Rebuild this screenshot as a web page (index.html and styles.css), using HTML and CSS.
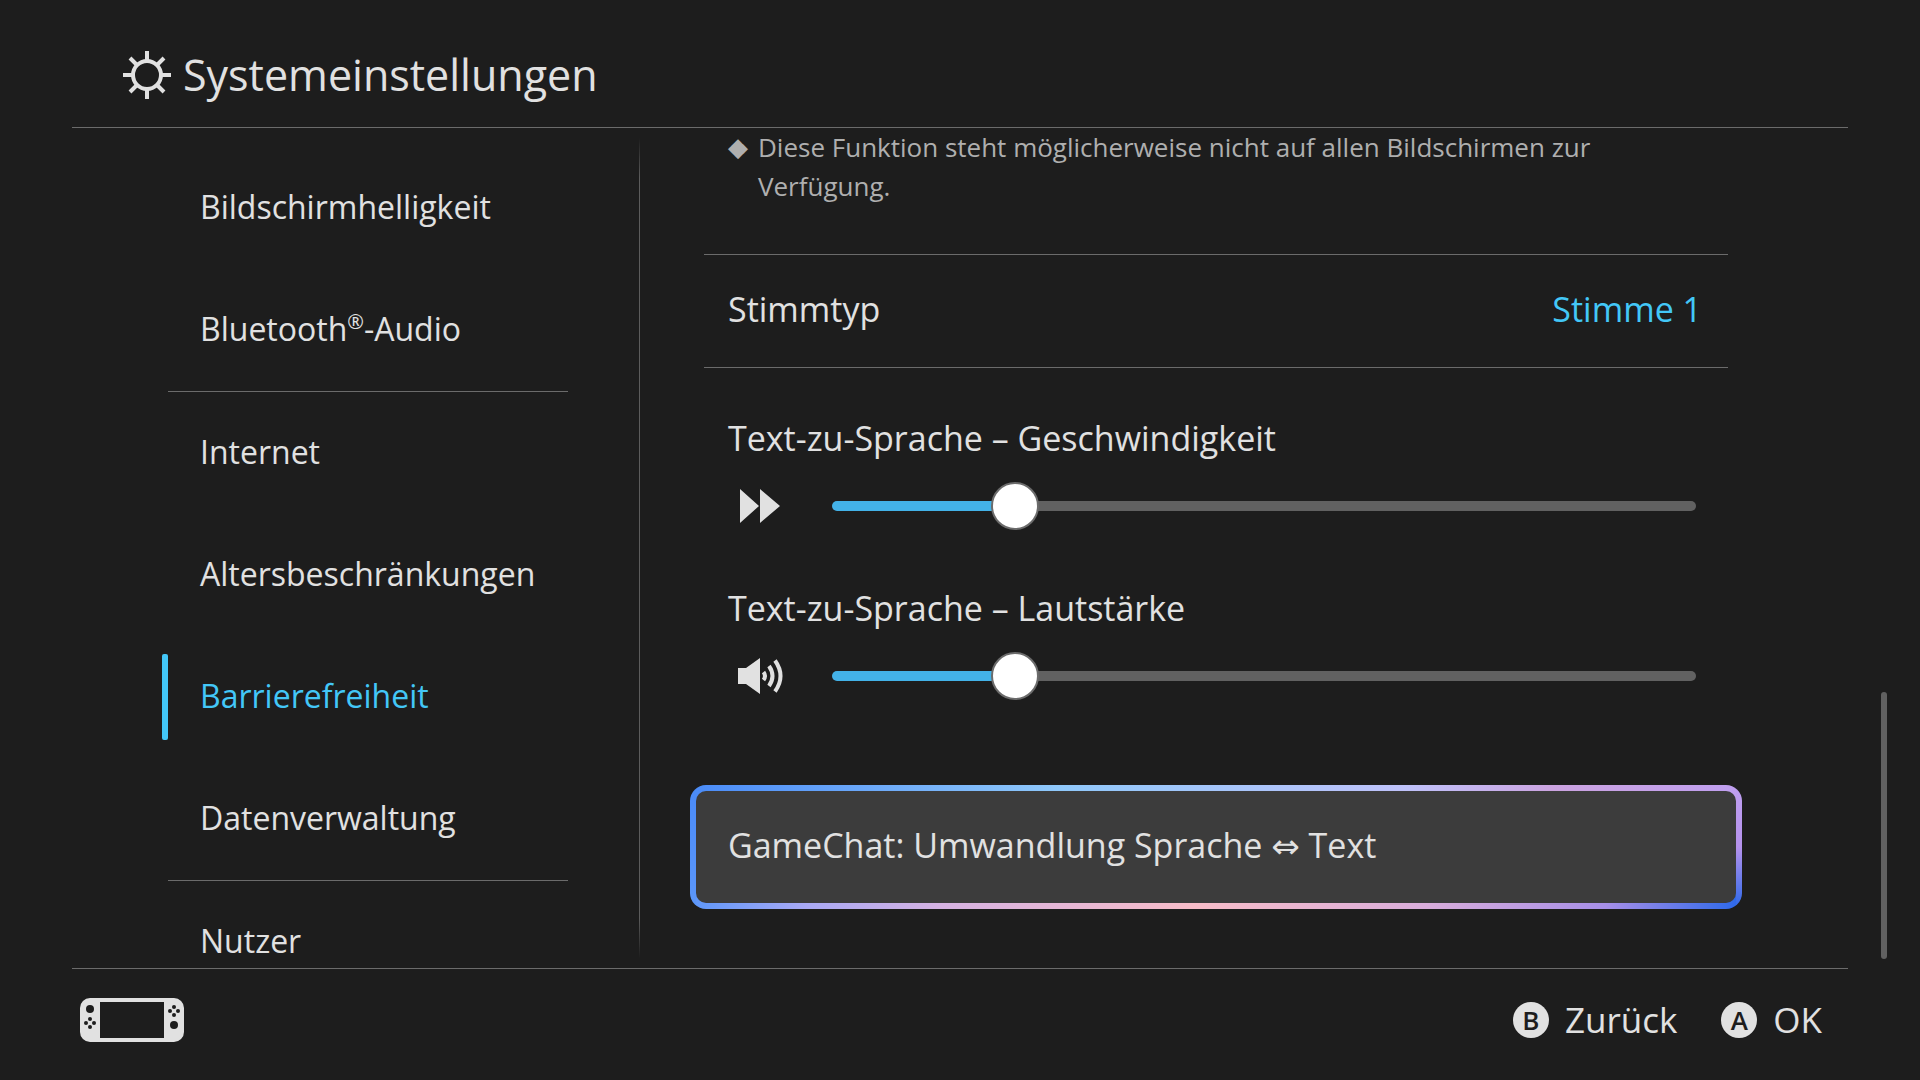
FILE: index.html
```html
<!DOCTYPE html>
<html lang="de">
  <head>
    <meta charset="UTF-8" />
    <meta name="viewport" content="width=device-width, initial-scale=1.0" />
    <title>Systemeinstellungen</title>
    <link rel="stylesheet" href="styles.css">
  </head>
  <body>
    <header class="header">
      <svg class="icon-sun" viewBox="0 0 48 48" width="48" height="48" aria-hidden="true">
        <circle cx="24" cy="24" r="14" />
        <path d="M24 0v9M24 39v9M0 24h9M39 24h9M7 7l6.500 6.500M34.500 34.500L41 41M41 7l-6.500 6.500M13.500 34.500L7 41" />
      </svg>
      <h1>Systemeinstellungen</h1>
    </header>

    <main class="main">
      <nav class="sidebar">
        <a class="item" href="#">Bildschirmhelligkeit</a>
        <a class="item" href="#"><span>Bluetooth<sup>®</sup>-Audio</span></a>
        <hr>
        <a class="item" href="#">Internet</a>
        <a class="item" href="#">Altersbeschränkungen</a>
        <a class="item active" href="#" aria-current="page">Barrierefreiheit</a>
        <a class="item" href="#">Datenverwaltung</a>
        <hr>
        <a class="item" href="#">Nutzer</a>
      </nav>
      <div class="separator"></div>

      <section class="content">
        <p class="note"><span class="diamond">◆</span><span>Diese Funktion steht möglicherweise nicht auf allen Bildschirmen zur Verfügung.</span></p>

        <button class="row" type="button">
          <span>Stimmtyp</span>
          <span class="value">Stimme 1</span>
        </button>

        <div class="setting">
          <label for="speed">Text-zu-Sprache – Geschwindigkeit</label>
          <div class="control">
            <svg viewBox="0 0 48 40" width="48" height="40" aria-hidden="true">
              <path d="M4 3l19 17L4 37zM24 3l20 17-20 17z" />
            </svg>
            <input type="range" id="speed" min="0" max="36" value="7">
          </div>
        </div>

        <div class="setting">
          <label for="volume">Text-zu-Sprache – Lautstärke</label>
          <div class="control">
            <svg viewBox="0 0 48 40" width="48" height="40" aria-hidden="true">
              <path d="M2 12h8L24 2v36L10 28H2z" />
              <path class="wave" d="M27.500 16q3 4 0 8M33 10q7 10 0 20M39 4.500q11 15.500 0 31" />
            </svg>
            <input type="range" id="volume" min="0" max="36" value="7">
          </div>
        </div>

        <button class="focused" type="button">GameChat: Umwandlung Sprache <span class="arrow">⇔</span> Text</button>
      </section>
      <div class="scrollbar"></div>
    </main>

    <footer class="footer">
      <svg class="console" viewBox="0 0 104 44" width="104" height="44" aria-hidden="true">
        <path fill-rule="evenodd" d="M10 0h84a10 10 0 0 1 10 10v24a10 10 0 0 1-10 10H10A10 10 0 0 1 0 34V10A10 10 0 0 1 10 0zM20 4v36h64V4z" />
        <g class="hole">
          <circle cx="10" cy="11" r="4" />
          <circle cx="10" cy="21" r="2" />
          <circle cx="10" cy="29" r="2" />
          <circle cx="6" cy="25" r="2" />
          <circle cx="14" cy="25" r="2" />
          <circle cx="94" cy="27" r="4" />
          <circle cx="94" cy="9" r="2" />
          <circle cx="94" cy="17" r="2" />
          <circle cx="90" cy="13" r="2" />
          <circle cx="98" cy="13" r="2" />
        </g>
      </svg>
      <div class="actions">
        <button type="button"><span class="key">B</span>Zurück</button>
        <button type="button"><span class="key">A</span>OK</button>
      </div>
    </footer>
  </body>
</html>
```
FILE: styles.css
```css
* {
  box-sizing: border-box;
}
body {
  margin: 0;
  height: 100vh;
  display: flex;
  flex-direction: column;
  overflow: hidden;
  background: #1d1d1d;
  color: #e1e1e1;
  font-family: "Open Sans", "Noto Sans", sans-serif;
  font-size: 34px;
}
button {
  padding: 0;
  border: none;
  background: none;
  color: inherit;
  font: inherit;
  text-align: left;
  cursor: pointer;
}
svg {
  flex: none;
  fill: #e1e1e1;
}

/* header */
.header {
  display: flex;
  align-items: center;
  gap: 12px;
  margin: 0 72px;
  padding: 47px 51px 24px;
  border-bottom: 1px solid #6b6b6b;
}
.header h1 {
  margin: 0;
  font-size: 43px;
  font-weight: 400;
  line-height: 56px;
}
.icon-sun {
  fill: none;
  stroke: #e1e1e1;
  stroke-width: 4;
}

.main {
  flex: 1;
  min-height: 0;
  display: grid;
  grid-template-columns: 639px 1px 1fr 39px;
}

/* left menu */
.sidebar {
  padding: 19px 71px 0 162px;
  overflow: hidden;
}
.sidebar hr {
  margin: 0 0 0 6px;
  border: none;
  border-top: 1px solid #6b6b6b;
}
.item {
  display: flex;
  align-items: center;
  gap: 32px;
  height: 122px;
  padding-bottom: 4px;
  color: inherit;
  font-size: 32px;
  text-decoration: none;
}
.item::before {
  content: "";
  width: 6px;
  height: 86px;
  margin-top: 4px;
  border-radius: 2px;
}
.item sup {
  font-size: 20px;
  line-height: 0;
}
.item.active {
  color: #43c7f7;
}
.item.active::before {
  background: #43c7f7;
}
.separator {
  margin: 10px 0;
  background: linear-gradient(transparent, #5c5c5c 40px, #5c5c5c calc(100% - 40px), transparent);
}

/* right side */
.content {
  display: flex;
  flex-direction: column;
  padding: 0 153px 0 64px;
  overflow: hidden;
}
.note {
  display: flex;
  margin: 0 110px 48px 24px;
  color: #afafaf;
  font-size: 26px;
  line-height: 39px;
}
.diamond {
  flex: none;
  width: 30px;
  font-family: "DejaVu Sans", sans-serif;
}
.row {
  display: flex;
  align-items: center;
  justify-content: space-between;
  height: 114px;
  padding: 0 26px 4px 24px;
  border-top: 1px solid #6b6b6b;
  border-bottom: 1px solid #6b6b6b;
}
.row .value {
  color: #43c7f7;
}
.setting {
  padding: 48px 32px 8px 24px;
}
.setting label {
  display: block;
  line-height: 44px;
}
.control {
  display: flex;
  align-items: center;
  gap: 48px;
  margin-top: 22px;
  padding-left: 8px;
}
.wave {
  fill: none;
  stroke: #e1e1e1;
  stroke-width: 4;
}
input[type="range"] {
  -webkit-appearance: none;
  appearance: none;
  flex: 1;
  height: 48px;
  margin: 0;
  background: none;
}
input[type="range"]::-webkit-slider-runnable-track {
  height: 10px;
  border-radius: 5px;
  background: linear-gradient(to right, #43b2e8 20%, #616161 20%);
}
input[type="range"]::-webkit-slider-thumb {
  -webkit-appearance: none;
  width: 48px;
  height: 48px;
  margin-top: -19px;
  border: 2px solid #6b6b6b;
  border-radius: 50%;
  background: #fff;
}
.focused {
  height: 124px;
  margin: 77px -14px 0;
  padding: 0 32px 4px;
  border: 6px solid transparent;
  border-radius: 16px;
  background:
    linear-gradient(#3c3c3c, #3c3c3c) padding-box,
    linear-gradient(#4a8bf8, #5c97fa) left / 6px 100% no-repeat border-box,
    linear-gradient(#bf9ff0, #b592ec 50%, #2a68ea) right / 6px 100% no-repeat border-box,
    linear-gradient(to right, #4a8bf8, #8fc8fa 35%, #bfc2fa 68%, #cba3e0 82%, #bf9ff0) top / 100% 50% no-repeat border-box,
    linear-gradient(to right, #5c97fa, #a9a9f5 11%, #d6b2e2 24%, #f7bcc8 48%, #d9addb 70%, #a78fe8 87%, #2a68ea) bottom / 100% 50% no-repeat border-box;
}
.arrow {
  font-family: "DejaVu Sans", sans-serif;
}
.scrollbar {
  align-self: end;
  width: 6px;
  height: 267px;
  margin-bottom: 9px;
  border-radius: 3px;
  background: #616161;
}

/* bottom bar */
.footer {
  display: flex;
  align-items: center;
  justify-content: space-between;
  height: 112px;
  margin: 0 72px;
  padding: 0 26px 10px 8px;
  border-top: 1px solid #6b6b6b;
}
.hole {
  fill: #1d1d1d;
}
.actions {
  display: flex;
  gap: 44px;
}
.actions button {
  display: flex;
  align-items: center;
  gap: 16px;
  font-size: 35px;
}
.key {
  width: 36px;
  height: 36px;
  border-radius: 50%;
  background: #e1e1e1;
  color: #1d1d1d;
  font-size: 26px;
  font-weight: 600;
  line-height: 36px;
  text-align: center;
}
```
